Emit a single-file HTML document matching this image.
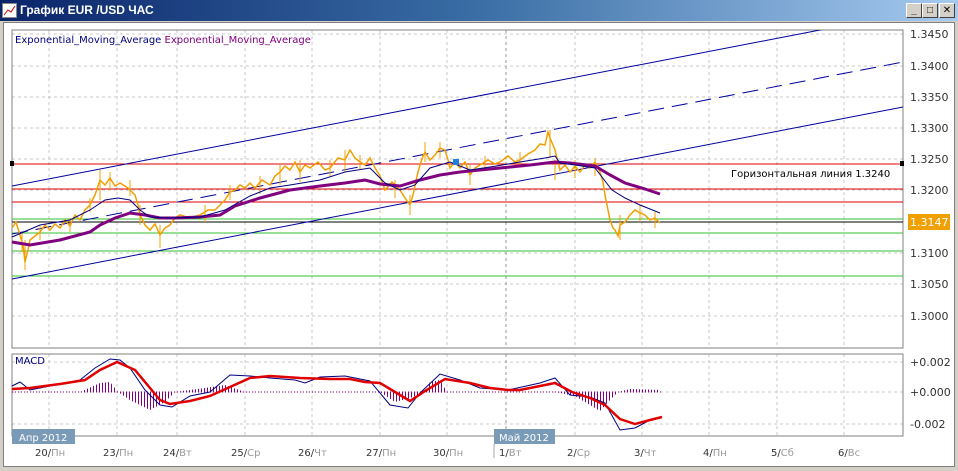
<!DOCTYPE html>
<html><head><meta charset="utf-8"><style>
body{margin:0;width:958px;height:471px;overflow:hidden;background:#d4d0c8;font-family:"Liberation Sans","DejaVu Sans",sans-serif}
#t{position:absolute;left:0;top:0;width:958px;height:21px;background:linear-gradient(90deg,#0a246a,#3a6ea5 50%,#a6caf0)}
#t span{position:absolute;left:20px;top:3px;color:#fff;font-weight:bold;font-size:12px}
.b{position:absolute;top:3px;width:14px;height:13px;background:#d4d0c8;border:1px solid;border-color:#fff #404040 #404040 #fff;font-size:10px;font-weight:bold;text-align:center;line-height:13px}
</style></head><body>
<div id="t"><svg style="position:absolute;left:2px;top:3px" width="15" height="15"><rect x=".5" y=".5" width="14" height="14" fill="#fff" stroke="#888"/><polyline points="2,12 6,7 9,9 13,3" fill="none" stroke="#c00"/></svg><span>График EUR /USD  ЧАС</span>
<div class="b" style="left:906px">_</div><div class="b" style="left:922px">□</div><div class="b" style="left:939px">✕</div></div>
<div style="position:absolute;left:3px;top:22px;width:950px;height:443px;background:#fff;border:1px solid #808080"></div>
<svg style="position:absolute;left:0;top:0" width="958" height="471" font-family="Liberation Sans,DejaVu Sans,sans-serif">
<defs><pattern id="h" width="3" height="10" patternUnits="userSpaceOnUse"><rect x="0" width="1" height="10" fill="#800080"/></pattern>
<clipPath id="c1"><rect x="12" y="30" width="891" height="318"/></clipPath></defs>
<g stroke="#c8c8c8" stroke-dasharray="3,3">
<path d="M49 30V348M117 30V348M177 30V348M245 30V348M312 30V348M380 30V348M447 30V348M575 30V348M642 30V348M709 30V348M777 30V348M844 30V348"/>
<path d="M49 354V436M117 354V436M177 354V436M245 354V436M312 354V436M380 354V436M447 354V436M575 354V436M642 354V436M709 354V436M777 354V436M844 354V436"/>
<path d="M12 34H903M12 66H903M12 97H903M12 128H903M12 159H903M12 190H903M12 253H903M12 284H903M12 316H903M12 362H903M12 392H903M12 424H903"/>
</g>
<path d="M506 30V348M506 354V436" stroke="#999" stroke-dasharray="3,3"/>
<rect x="12" y="30" width="891" height="318" fill="none" stroke="#808080"/>
<rect x="12" y="354" width="891" height="82" fill="none" stroke="#808080"/>
<g stroke-width="1">
<path d="M12 164H903M12 189H903M12 202H903" stroke="#e00000"/>
<path d="M12 219H903M12 233H903M12 251H903M12 276H903" stroke="#30c030"/>
<path d="M12 222H903" stroke="#000"/>
</g>
<g clip-path="url(#c1)" stroke="#0000a0" fill="none">
<path d="M12 186L903 14"/><path d="M12 234L903 62" stroke-dasharray="16,8"/><path d="M12 279L903 107"/>
</g>
<polyline fill="none" stroke="#f0a000" stroke-width="1.5" points="12,228 16,222 20,235 23,245 25,262 28,250 30,240 35,236 40,232 45,225 50,230 55,224 60,228 65,220 70,226 75,215 80,220 85,210 90,205 95,195 100,180 105,185 110,178 115,186 120,183 128,188 135,195 138,205 140,215 145,225 150,230 155,224 160,235 165,228 170,225 175,218 180,215 190,218 200,215 208,210 215,210 220,205 225,200 230,192 235,190 240,185 245,188 250,183 255,188 262,180 270,185 275,176 280,172 285,166 290,170 295,162 300,172 305,165 310,168 318,162 325,170 330,168 338,158 345,160 350,150 355,158 360,162 365,165 370,158 375,168 380,176 385,190 392,182 400,190 405,198 410,205 413,195 415,185 418,172 420,165 423,156 425,152 430,160 435,155 440,148 445,150 448,160 450,168 455,162 460,168 465,162 470,175 475,168 480,165 488,160 495,164 500,162 508,156 515,162 520,160 528,154 535,150 540,144 545,145 548,132 550,138 553,145 555,150 558,162 560,170 565,165 570,172 575,166 580,172 585,165 590,168 595,162 600,172 603,182 605,195 608,210 610,220 613,228 615,230 618,236 620,225 625,222 630,215 635,210 640,213 645,215 650,220 655,218 660,223"/>
<path stroke="#f0a000" d="M25 240V270M100 170V200M160 225V248M280 165V185M345 150V172M410 195V215M425 142V162M550 130V158M555 160V180M620 215V240M300 160V182M230 185V200M470 165V185M40 226V240M70 218V232M90 198V212M110 172V190M140 205V225M205 205V222M260 176V194M330 160V176M360 155V170M395 180V198M440 142V158M485 156V170M520 152V166M575 160V178M595 158V176M640 205V222M655 212V228M22 232V252M130 180V196" />
<polyline fill="none" stroke="#800080" stroke-width="3" points="12,242 30,245 60,240 90,232 100,225 115,218 130,213 145,215 160,218 175,218 200,217 220,215 235,206 260,198 290,190 320,186 345,183 365,180 380,184 400,186 420,180 440,175 460,172 480,170 500,168 530,165 555,162 570,163 595,166 610,175 625,183 645,189 660,194"/>
<polyline fill="none" stroke="#000080" points="12,237 40,225 70,220 90,210 105,200 118,198 130,200 140,210 150,217 170,218 200,217 225,210 250,196 270,188 290,185 320,180 345,172 370,168 385,183 400,190 415,185 430,168 450,162 470,170 490,167 520,162 545,158 555,156 560,163 575,165 595,168 612,190 625,198 640,205 660,213"/>
<rect x="453" y="159" width="6" height="6" fill="#2080e0"/>
<rect x="10" y="161" width="4" height="5" fill="#000"/><rect x="900" y="161" width="4" height="5" fill="#000"/>
<path d="M12 392H662" stroke="#800080" stroke-dasharray="1,2"/>
<polygon fill="url(#h)" points="80,392 100,383 110,382 118,392 130,400 150,410 165,402 175,392 205,388 225,385 245,392 380,392 395,402 410,398 425,392 430,382 440,380 447,392 555,392 575,396 590,405 600,411 610,400 618,392 630,389 660,390 660,392"/>
<polyline fill="none" stroke="#000080" points="12,386 20,382 30,390 60,384 80,380 95,368 110,359 120,360 130,368 145,390 160,405 172,407 190,396 210,392 230,375 250,376 270,378 295,380 305,383 320,377 345,376 370,381 390,405 408,408 420,393 440,374 460,380 480,388 508,390 540,383 555,378 570,395 590,397 605,403 620,430 635,428 650,420 662,417"/>
<polyline fill="none" stroke="#e00000" stroke-width="2.5" points="12,389 30,388 60,384 85,380 100,370 117,362 135,370 150,388 160,400 170,404 190,401 210,396 230,387 250,378 270,376 300,378 330,379 350,379 365,382 380,383 395,392 410,401 425,391 445,379 470,383 490,388 508,390 520,390 540,386 555,383 572,392 590,398 605,405 620,419 635,424 650,420 662,417"/>
<g font-size="11" font-family="DejaVu Sans,sans-serif">
<text x="15" y="43" fill="#000080" font-size="10">Exponential_Moving_Average <tspan fill="#800080">Exponential_Moving_Average</tspan></text>
<text x="15" y="364" fill="#000080" font-size="10">MACD</text>
<text x="731" y="177" fill="#000" font-size="10">Горизонтальная линия 1.3240</text>
<g fill="#333"><text x="910" y="38">1.3450</text><text x="910" y="70">1.3400</text><text x="910" y="101">1.3350</text><text x="910" y="132">1.3300</text><text x="910" y="163">1.3250</text><text x="910" y="194">1.3200</text><text x="910" y="257">1.3100</text><text x="910" y="288">1.3050</text><text x="910" y="320">1.3000</text>
<text x="910" y="366">+0.002</text><text x="910" y="396">+0.000</text><text x="910" y="428">-0.002</text></g>
<rect x="908" y="214" width="42" height="16" fill="#f0a000"/><text x="910" y="226" fill="#fff">1.3147</text>
<rect x="12" y="429" width="63" height="15" fill="#7a9bb8"/><text x="19" y="441" fill="#fff" font-size="10">Апр 2012</text>
<rect x="494" y="429" width="61" height="15" fill="#7a9bb8"/><text x="499" y="441" fill="#fff" font-size="10">Май 2012</text>
<path d="M494 444V458" stroke="#aaa"/>
<g font-size="10" fill="#333">
<text x="35" y="456">20/<tspan fill="#999">Пн</tspan></text><text x="103" y="456">23/<tspan fill="#999">Пн</tspan></text><text x="163" y="456">24/<tspan fill="#999">Вт</tspan></text><text x="231" y="456">25/<tspan fill="#999">Ср</tspan></text><text x="298" y="456">26/<tspan fill="#999">Чт</tspan></text><text x="366" y="456">27/<tspan fill="#999">Пн</tspan></text><text x="433" y="456">30/<tspan fill="#999">Пн</tspan></text><text x="499" y="456">1/<tspan fill="#999">Вт</tspan></text><text x="567" y="456">2/<tspan fill="#999">Ср</tspan></text><text x="634" y="456">3/<tspan fill="#999">Чт</tspan></text><text x="703" y="456">4/<tspan fill="#999">Пн</tspan></text><text x="771" y="456">5/<tspan fill="#999">Сб</tspan></text><text x="838" y="456">6/<tspan fill="#999">Вс</tspan></text>
</g></g>
</svg>
</body></html>
